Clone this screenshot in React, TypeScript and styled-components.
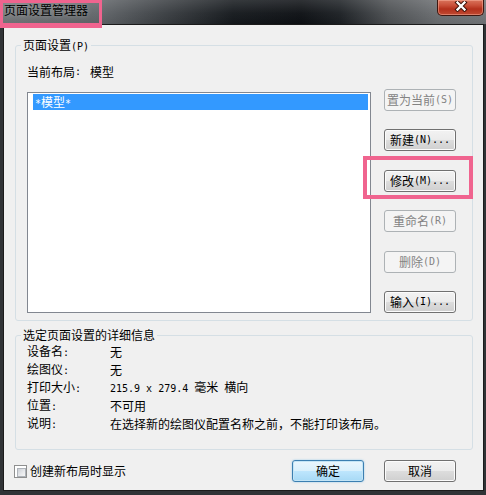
import React from "react";
import styled, { createGlobalStyle } from "styled-components";

const Global = createGlobalStyle`
  html, body { margin: 0; padding: 0; background: #2f3235; }
  body {
    font-family: "Noto Sans CJK SC", "DejaVu Sans", sans-serif;
    font-size: 12px;
    color: #000;
  }
  * { box-sizing: border-box; }
`;

const Win = styled.div`
  position: relative;
  width: 486px;
  height: 495px;
  display: flex;
  flex-direction: column;
  background: #303336;
  overflow: hidden;
`;

const TitleBar = styled.div`
  height: 24px;
  flex: none;
  display: flex;
  align-items: flex-start;
  background:
    linear-gradient(180deg, rgba(255, 255, 255, 0.14) 0%, rgba(255, 255, 255, 0.03) 55%, rgba(0, 0, 0, 0.05) 100%),
    linear-gradient(90deg, #75787b 0%, #62666a 20%, #3a3e42 34%, #15191d 48%, #0d1014 62%, #1c2024 70%, #4d5053 80%, #6a6d70 90%, #727578 100%);
`;

const Title = styled.div`
  padding: 3px 0 0 4px;
  line-height: 14px;
  font-size: 12px;
  color: #000;
  text-shadow: 0 0 5px rgba(255, 255, 255, 0.35);
`;

const Close = styled.div`
  margin-left: auto;
  margin-right: 2px;
  width: 47px;
  height: 16px;
  border: 1px solid #3e1710;
  border-top: none;
  border-radius: 0 0 5px 5px;
  background: linear-gradient(180deg, #d9735c 0%, #c9503a 35%, #b3301c 60%, #c04a32 100%);
  box-shadow: inset 0 0 0 1px rgba(255, 190, 170, 0.45);
  display: flex;
  justify-content: center;
  padding-top: 1px;
`;

const TitleMark = styled.div`
  position: absolute;
  left: 0;
  top: 0;
  width: 102px;
  height: 28px;
  border: 3px solid #f0648f;
  border-bottom-width: 5px;
  pointer-events: none;
`;

const Client = styled.div`
  flex: 1;
  margin: 0 2px 4px 3px;
  border: 1px solid #1b1b1b;
  background: #f0f0f0;
  padding: 20px 10px 0 11px;
  display: flex;
  flex-direction: column;
`;

const Group = styled.section<{ $mt: number; $pb: number }>`
  margin-top: ${(p) => p.$mt}px;
  border: 1px solid #d5dfe5;
  border-radius: 3px;
  padding: 0 16px ${(p) => p.$pb}px 11px;
  display: flex;
  flex-direction: column;
`;

const Legend = styled.div`
  align-self: flex-start;
  margin: -8px 0 0 -6px;
  padding: 0 2px;
  background: #f0f0f0;
  line-height: 14px;
`;

const M = styled.span`
  font-family: "DejaVu Sans Mono", "Liberation Mono", monospace;
  font-size: 10px;
`;

const CurrentRow = styled.div`
  margin-top: 11px;
  line-height: 14px;
  display: flex;
`;

const CurrentValue = styled.span`
  margin-left: 9px;
`;

const Body = styled.div`
  margin-top: 10px;
  height: 224px;
  display: flex;
  gap: 13px;
`;

const ListBox = styled.div`
  width: 344px;
  height: 221px;
  margin-top: 3px;
  border: 1px solid #828790;
  background: #fff;
  padding: 1px 2px 0 5px;
`;

const ListItem = styled.div<{ $selected?: boolean }>`
  height: 16px;
  line-height: 16px;
  padding-left: 2px;
  background: ${(p) => (p.$selected ? "#3399ff" : "transparent")};
  color: ${(p) => (p.$selected ? "#fff" : "#000")};
`;

const ButtonCol = styled.div`
  width: 72px;
  display: flex;
  flex-direction: column;
  justify-content: space-between;
`;

type Variant = "normal" | "default" | "disabled";

const Btn = styled.div<{ $variant?: Variant }>`
  width: 72px;
  height: 22px;
  border-radius: 3px;
  display: flex;
  align-items: center;
  justify-content: center;
  white-space: nowrap;
  line-height: 14px;
  border: 1px solid
    ${(p) => (p.$variant === "disabled" ? "#adb2b5" : p.$variant === "default" ? "#3c7fb1" : "#707070")};
  color: ${(p) => (p.$variant === "disabled" ? "#838383" : "#000")};
  background: ${(p) =>
    p.$variant === "disabled"
      ? "#f4f4f4"
      : p.$variant === "default"
      ? "linear-gradient(180deg, #eaf6fd 0%, #d9f0fc 50%, #bee6fd 50%, #a7d9f5 100%)"
      : "linear-gradient(180deg, #f2f2f2 0%, #ebebeb 50%, #dddddd 50%, #cfcfcf 100%)"};
  box-shadow: ${(p) =>
    p.$variant === "disabled"
      ? "none"
      : p.$variant === "default"
      ? "inset 0 0 0 1px #c4e5f6, 0 0 2px rgba(80, 170, 230, 0.6)"
      : "inset 0 0 0 1px #fcfcfc"};
`;

const Marked = styled.div`
  position: relative;
`;

const ButtonMark = styled.div`
  position: absolute;
  left: -21px;
  top: -14px;
  width: 110px;
  height: 43px;
  border: 4px solid #f0648f;
  pointer-events: none;
`;

const InfoGrid = styled.div`
  margin-top: 1px;
  display: grid;
  grid-template-columns: 83px 1fr;
  grid-auto-rows: 18px;
  align-items: center;
  line-height: 14px;
  white-space: nowrap;
`;

const Footer = styled.div`
  margin-top: 10px;
  height: 22px;
  display: flex;
  align-items: center;
  padding-right: 17px;
  gap: 20px;
`;

const CheckWrap = styled.label`
  display: flex;
  align-items: center;
  margin-left: -1px;
  line-height: 14px;
`;

const CheckBox = styled.span`
  width: 13px;
  height: 13px;
  border: 1px solid #8e8f8f;
  background: #fff;
  padding: 2px;
  margin-right: 3px;
  &::after {
    content: "";
    display: block;
    width: 100%;
    height: 100%;
    border: 1px solid #aeb3b9;
    background: linear-gradient(135deg, #cbcfd5 0%, #e6e8eb 55%, #f7f7f7 100%);
  }
`;

const Spacer = styled.div`
  flex: 1;
`;

const CloseX = () => (
  <svg width="14" height="11" viewBox="0 0 14 11">
    <path d="M3.5 1.5 L10.5 8.5 M10.5 1.5 L3.5 8.5" stroke="#3a1008" strokeWidth="4.2" strokeLinecap="square" />
    <path d="M3.5 1.5 L10.5 8.5 M10.5 1.5 L3.5 8.5" stroke="#ffffff" strokeWidth="2.3" strokeLinecap="square" />
  </svg>
);

const details: [string, React.ReactNode][] = [
  ["设备名", "无"],
  ["绘图仪", "无"],
  [
    "打印大小",
    <>
      <M>215.9 x 279.4 </M>毫米<M> </M>横向
    </>,
  ],
  ["位置", "不可用"],
  ["说明", "在选择新的绘图仪配置名称之前，不能打印该布局。"],
];

export default function App() {
  return (
    <Win>
      <Global />
      <TitleBar>
        <Title>页面设置管理器</Title>
        <Close>
          <CloseX />
        </Close>
      </TitleBar>
      <TitleMark />
      <Client>
        <Group $mt={0} $pb={7}>
          <Legend>
            页面设置<M>(P)</M>
          </Legend>
          <CurrentRow>
            当前布局<M>:</M>
            <CurrentValue>模型</CurrentValue>
          </CurrentRow>
          <Body>
            <ListBox>
              <ListItem $selected>
                <M>*</M>模型<M>*</M>
              </ListItem>
            </ListBox>
            <ButtonCol>
              <Btn $variant="disabled">
                置为当前<M>(S)</M>
              </Btn>
              <Btn>
                新建<M>(N)...</M>
              </Btn>
              <Marked>
                <Btn>
                  修改<M>(M)...</M>
                </Btn>
                <ButtonMark />
              </Marked>
              <Btn $variant="disabled">
                重命名<M>(R)</M>
              </Btn>
              <Btn $variant="disabled">
                删除<M>(D)</M>
              </Btn>
              <Btn>
                输入<M>(I)...</M>
              </Btn>
            </ButtonCol>
          </Body>
        </Group>
        <Group $mt={14} $pb={16}>
          <Legend>选定页面设置的详细信息</Legend>
          <InfoGrid>
            {details.map(([k, v]) => (
              <React.Fragment key={k}>
                <span>
                  {k}
                  <M>:</M>
                </span>
                <span>{v}</span>
              </React.Fragment>
            ))}
          </InfoGrid>
        </Group>
        <Footer>
          <CheckWrap>
            <CheckBox />
            创建新布局时显示
          </CheckWrap>
          <Spacer />
          <Btn $variant="default">确定</Btn>
          <Btn>取消</Btn>
        </Footer>
      </Client>
    </Win>
  );
}
